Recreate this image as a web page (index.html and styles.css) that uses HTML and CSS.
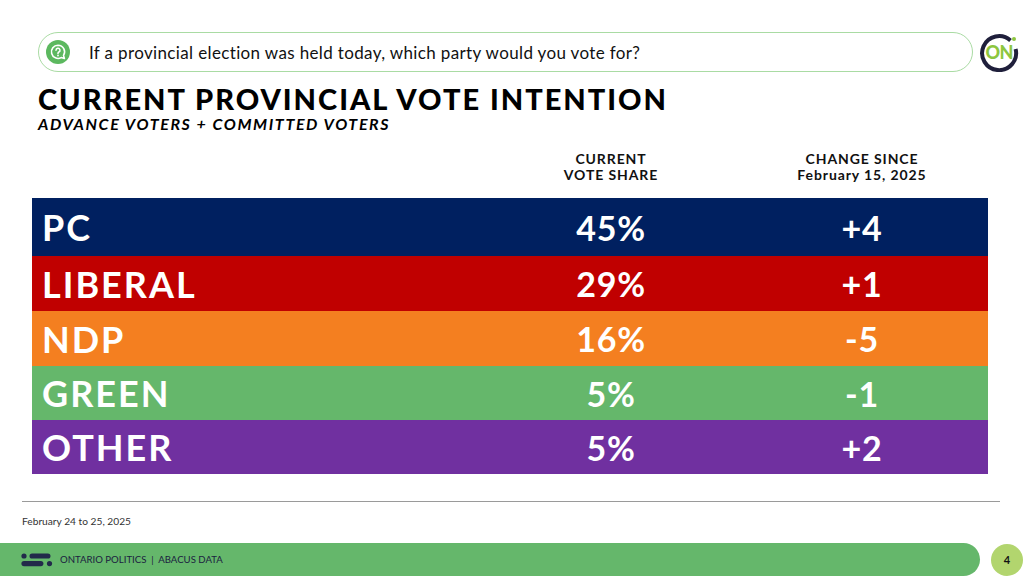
FILE: index.html
```html
<!DOCTYPE html>
<html lang="en">
<head>
<meta charset="utf-8">
<title>Current Provincial Vote Intention</title>
<link rel="stylesheet" href="styles.css">
</head>
<body>
<div class="slide">
  <header class="top">
    <div class="question">
      <svg class="q-icon" viewBox="0 0 24 24" width="24" height="24" aria-hidden="true">
        <circle cx="12" cy="12" r="12" fill="#5cb85f"/>
        <path d="M12 5.2a6.6 6.6 0 1 0 3.2 12.4l3.2 0.9-0.9-3.1A6.6 6.6 0 0 0 12 5.2z" fill="none" stroke="#fff" stroke-width="1.6" stroke-linejoin="round"/>
        <path d="M10 10.2a2 2 0 1 1 2.9 1.8c-0.6 0.3-0.9 0.7-0.9 1.3v0.4" fill="none" stroke="#fff" stroke-width="1.5" stroke-linecap="round"/>
        <circle cx="12" cy="15.6" r="0.9" fill="#fff"/>
      </svg>
      <span class="q-text">If a provincial election was held today, which party would you vote for?</span>
    </div>
    <div class="on-logo">
      <svg viewBox="0 0 40 40" width="40" height="40" aria-hidden="true">
        <path d="M31.5 8.5A17 17 0 1 0 36.6 17" fill="none" stroke="#1f1f3b" stroke-width="4"/>
        <circle cx="35" cy="7" r="2" fill="#8dc63f"/>
      </svg>
      <span class="on-text">ON</span>
    </div>
  </header>

  <h1 class="title">CURRENT PROVINCIAL VOTE INTENTION</h1>
  <p class="subtitle">ADVANCE VOTERS + COMMITTED VOTERS</p>

  <div class="table">
    <div class="thead">
      <div></div>
      <div class="th">CURRENT<br>VOTE SHARE</div>
      <div class="th">CHANGE SINCE<br>February 15, 2025</div>
    </div>
    <div class="row pc"><div class="party">PC</div><div class="val">45%</div><div class="val">+4</div></div>
    <div class="row lib"><div class="party">LIBERAL</div><div class="val">29%</div><div class="val">+1</div></div>
    <div class="row ndp"><div class="party">NDP</div><div class="val">16%</div><div class="val">-5</div></div>
    <div class="row grn"><div class="party">GREEN</div><div class="val">5%</div><div class="val">-1</div></div>
    <div class="row oth"><div class="party">OTHER</div><div class="val">5%</div><div class="val">+2</div></div>
  </div>

  <div class="rule"></div>
  <p class="date">February 24 to 25, 2025</p>

  <footer class="footer">
    <div class="bar">
      <svg class="abacus" viewBox="0 0 32 14" width="32" height="14" aria-hidden="true">
        <circle cx="3" cy="3" r="2.6" fill="#222a4a"/>
        <rect x="8.5" y="0.4" width="21" height="5.2" rx="2.6" fill="#222a4a"/>
        <rect x="0.4" y="8" width="22" height="5.2" rx="2.6" fill="#222a4a"/>
        <circle cx="28.5" cy="10.6" r="2.6" fill="#222a4a"/>
      </svg>
      <span class="foot-text">ONTARIO POLITICS &nbsp;|&nbsp; ABACUS DATA</span>
    </div>
    <div class="page">4</div>
  </footer>
</div>
</body>
</html>
```

FILE: styles.css
```css
* { box-sizing: border-box; }
html, body { margin: 0; padding: 0; background: #fff; }
body { font-family: "Lato", "Open Sans", sans-serif; color: #000; }

.slide {
  width: 1024px;
  height: 576px;
  position: relative;
  overflow: hidden;
  display: flex;
  flex-direction: column;
}

.top {
  display: flex;
  align-items: center;
  padding: 32px 5px 0 38px;
  gap: 6px;
}

.question {
  width: 938px;
  height: 40px;
  border: 1.5px solid #a9dba3;
  border-radius: 20px;
  display: flex;
  align-items: center;
  padding-left: 7px;
  gap: 19px;
}
.q-icon { flex: none; }
.q-text { font-size: 17px; color: #111; letter-spacing: 0.36px; }

.on-logo {
  position: relative;
  width: 40px;
  height: 40px;
  display: flex;
  align-items: center;
  justify-content: center;
}
.on-logo svg { position: absolute; left: 0; top: 0; }
.on-text {
  position: relative;
  font-weight: 900;
  font-size: 18px;
  color: #8dc63f;
  letter-spacing: -0.8px;
}

.title {
  margin: 11px 0 0 38px;
  font-size: 29px;
  font-weight: 900;
  line-height: 31px;
  letter-spacing: 2px;
}
.subtitle {
  margin: 1px 0 0 38px;
  font-size: 16px;
  font-weight: 700;
  font-style: italic;
  line-height: 18px;
  letter-spacing: 1.6px;
}

.table {
  margin: 18px 0 0 32px;
  width: 956px;
}
.thead, .row {
  display: grid;
  grid-template-columns: 454px 250px 1fr;
}
.thead { height: 47px; }
.th {
  text-align: center;
  font-size: 14px;
  font-weight: 700;
  line-height: 16px;
  color: #111;
  letter-spacing: 0.9px;
}
.row {
  align-items: center;
  color: #fff;
  font-weight: 700;
  font-size: 34px;
  height: 55px;
}
.row .party { padding-left: 10px; font-size: 36px; letter-spacing: 2px; }
.row .val { text-align: center; letter-spacing: 0.8px; }
.pc { background: #002060; height: 58px; }
.lib { background: #c00000; }
.ndp { background: #f47f20; }
.grn { background: #65b76b; height: 54px; }
.oth { background: #7030a0; height: 54px; }

.rule {
  margin: 27px 0 0 22px;
  width: 978px;
  height: 1px;
  background: #9a9a9a;
}
.date {
  margin: 13px 0 0 22px;
  font-size: 10.2px;
  color: #333;
}

.footer {
  position: absolute;
  left: 0;
  bottom: 0;
  width: 1024px;
  height: 33px;
  display: flex;
  align-items: center;
}
.bar {
  width: 980px;
  height: 33px;
  background: #65b76b;
  border-radius: 0 17px 17px 0;
  display: flex;
  align-items: center;
  padding-left: 21px;
  gap: 7px;
}
.foot-text { font-size: 9.6px; color: #1b2140; }
.page {
  margin-left: 11px;
  width: 32px;
  height: 32px;
  border-radius: 50%;
  background: #b2d56e;
  font-size: 11px;
  font-weight: 700;
  display: flex;
  align-items: center;
  justify-content: center;
  color: #111;
}
```
